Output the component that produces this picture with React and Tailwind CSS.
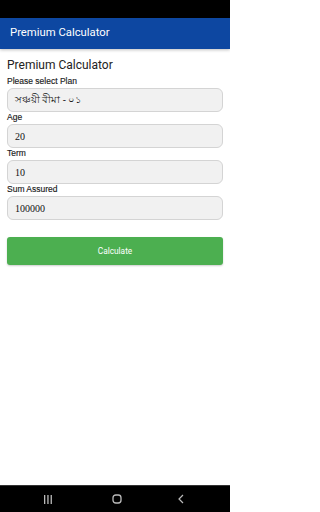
import React from "react";

function Field({ label, value, valueSize = "text-[10px]" }) {
  return (
    <div className="flex flex-col">
      <div className="h-[11px] text-[8.5px] leading-[11px] font-['Liberation_Sans',Arial,sans-serif] text-[#1a1a1a] [-webkit-text-stroke:0.15px_#1a1a1a]">{label}</div>
      <div className={`mt-[1px] h-[24px] rounded-[6px] border border-[#d4d4d4] bg-[#f1f1f1] flex items-center pl-[7px] ${valueSize} text-[#111] font-['Liberation_Serif','Noto_Sans',serif]`}>
        {value}
      </div>
    </div>
  );
}

export default function App() {
  return (
    <div className="w-[230px] h-[512px] bg-white flex flex-col font-['Roboto',sans-serif] overflow-hidden">
      <div className="h-[18px] bg-black shrink-0" />
      <div className="h-[31px] bg-[#0d47a1] flex items-center px-[10px] text-white text-[11.3px] shrink-0 shadow-[0_1px_3px_rgba(0,0,0,0.25)]">
        Premium Calculator
      </div>
      <div className="flex-1 flex flex-col px-[7px]">
        <div className="mt-[8px] text-[12px] leading-[16px] text-[#222]">Premium Calculator</div>
        <div className="mt-[3px]">
          <Field label="Please select Plan" value="সঞ্চয়ী বীমা - ০১" valueSize="text-[9.5px]" />
          <Field label="Age" value="20" />
          <Field label="Term" value="10" />
          <Field label="Sum Assured" value="100000" />
        </div>
        <button className="mt-[17px] h-[28px] w-full rounded-[3px] bg-[#4caf50] text-white text-[8.3px] font-normal flex items-center justify-center shadow-[0_1px_2px_rgba(0,0,0,0.2)]">
          Calculate
        </button>
      </div>
      <div className="h-[27px] bg-black flex items-center shrink-0 border-t border-[#333] pl-[43px]">
        <svg width="10" height="9" viewBox="0 0 10 9">
          <rect x="1" y="0" width="1.3" height="9" fill="#bbb" />
          <rect x="4.3" y="0" width="1.3" height="9" fill="#bbb" />
          <rect x="7.6" y="0" width="1.3" height="9" fill="#bbb" />
        </svg>
        <svg width="10" height="10" viewBox="0 0 10 10" className="ml-[59px]">
          <rect x="1" y="1" width="8" height="8" rx="2.8" fill="none" stroke="#bbb" strokeWidth="1.3" />
        </svg>
        <svg width="6" height="10" viewBox="0 0 6 10" className="ml-[56px]">
          <path d="M5 1 L1 5 L5 9" fill="none" stroke="#bbb" strokeWidth="1.2" />
        </svg>
      </div>
    </div>
  );
}
